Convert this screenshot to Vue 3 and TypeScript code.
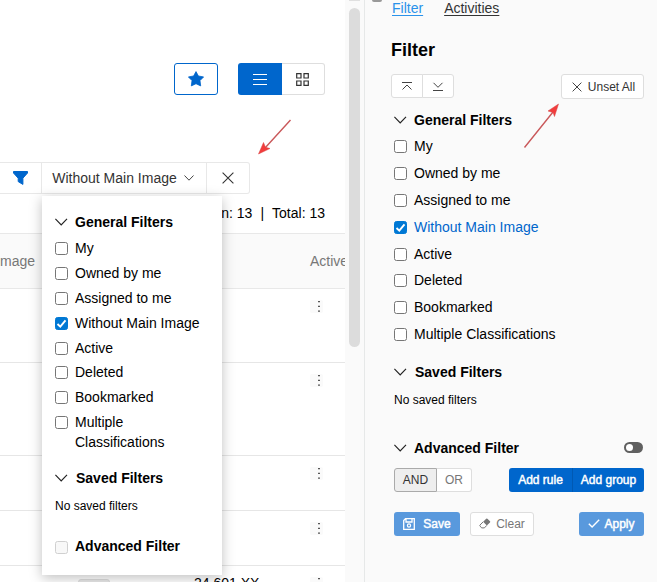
<script setup lang="ts">
interface FilterItem {
  label: string
  checked: boolean
}

const filters: FilterItem[] = [
  { label: 'My', checked: false },
  { label: 'Owned by me', checked: false },
  { label: 'Assigned to me', checked: false },
  { label: 'Without Main Image', checked: true },
  { label: 'Active', checked: false },
  { label: 'Deleted', checked: false },
  { label: 'Bookmarked', checked: false },
  { label: 'Multiple Classifications', checked: false },
]

const rowSizes: string[] = ['r74', 'r93', 'r55', 'r55', 'r55']
</script>

<template>
  <div class="screen">
    <main class="list">
      <div class="toolbar">
        <button class="star">
          <svg width="16" height="16" viewBox="0 0 16 16"><path d="M8 .6 10.4 5 15.6 5.900 12 9.600 12.700 14.900 8 12.700 3.300 14.900 4 9.600 .4 5.900 5.600 5Z" fill="#06c" stroke="#06c" stroke-width=".8" stroke-linejoin="round" /></svg>
        </button>
        <div class="views">
          <button class="view on">
            <svg width="14" height="11" viewBox="0 0 14 11"><path d="M0 .5H14M0 5.5H14M0 10.5H14" stroke="#fff" /></svg>
          </button>
          <button class="view grid">
            <svg width="13" height="13" viewBox="0 0 13 13"><path d="M.7 .7H5V5H.7ZM8 .7H12.3V5H8ZM.7 8H5V12.3H.7ZM8 8H12.3V12.3H8Z" fill="none" stroke="#333" stroke-width="1.2" /></svg>
          </button>
        </div>
      </div>

      <div class="filterbar">
        <div class="seg funnel">
          <svg width="15" height="14" viewBox="0 0 15 14"><path d="M.5 .5H14.5V2L9.9 7.2V13.4L5.2 10.6V7.2L.5 2Z" fill="#06c" stroke="#06c" stroke-linejoin="round" /></svg>
        </div>
        <div class="seg current">
          <span>Without Main Image</span>
          <svg width="10" height="6" viewBox="0 0 10 6"><path d="M.5 .5 5 5.2 9.5 .5" fill="none" stroke="#444" /></svg>
        </div>
        <div class="seg clear">
          <svg width="12" height="12" viewBox="0 0 12 12"><path d="M.6 .6 11.4 11.4M11.4 .6 .6 11.4" stroke="#333" stroke-width="1.1" /></svg>
        </div>
      </div>

      <div class="counts"><span>Shown: 13</span><span>|</span><span>Total: 13</span></div>

      <div class="table">
        <div class="thead"><span class="c-image">Main Image</span><span class="c-active">Active</span></div>
        <div v-for="(size, i) in rowSizes" :key="i" class="trow" :class="size">
          <span v-if="i === 4" class="tag"></span>
          <span v-if="i === 4" class="number">24 601 XX</span>
          <span class="more">
            <svg width="13" height="13" viewBox="0 0 13 13"><path d="M8 1H10V2.2H8ZM8 5.7H10V7H8ZM8 10.5H10V11.8H8Z" fill="#555" /></svg>
          </span>
        </div>
      </div>

      <div class="menu">
        <div class="group-title">
          <svg width="13" height="8" viewBox="0 0 13 8"><path d="M.4 .9 6.2 6.8 12 .9" fill="none" stroke="#222" stroke-width="1.2" /></svg>
          <span>General Filters</span>
        </div>
        <div v-for="f in filters" :key="f.label" class="item">
          <span class="box" :class="{ checked: f.checked }">
            <svg v-if="f.checked" width="11" height="11" viewBox="0 0 11 11"><path d="M1.5 6 4.3 8.7 9.5 2.4" fill="none" stroke="#fff" stroke-width="1.9" /></svg>
          </span>
          <span>{{ f.label }}</span>
        </div>
        <div class="group-title saved">
          <svg width="13" height="8" viewBox="0 0 13 8"><path d="M.4 .9 6.2 6.8 12 .9" fill="none" stroke="#222" stroke-width="1.2" /></svg>
          <span>Saved Filters</span>
        </div>
        <div class="empty">No saved filters</div>
        <div class="item advanced"><span class="box disabled"></span><span>Advanced Filter</span></div>
      </div>
    </main>

    <div class="gutter"><div class="track-end"></div><div class="thumb"></div></div>

    <aside class="panel">
      <div class="edge"></div>
      <nav class="tabs"><a class="active">Filter</a><a>Activities</a></nav>
      <h2>Filter</h2>
      <div class="actions">
        <div class="pair">
          <button class="btn"><svg width="12" height="9" viewBox="0 0 12 9"><path d="M1 .5H11M1.500 7.500 6 3 10.500 7.500" fill="none" stroke="#444" /></svg></button>
          <button class="btn"><svg width="12" height="9" viewBox="0 0 12 9"><path d="M1 8.5H11M1.5 .8 6 5.3 10.5 .8" fill="none" stroke="#444" /></svg></button>
        </div>
        <button class="btn unset">
          <svg width="10" height="10" viewBox="0 0 10 10"><path d="M.6 .6 9.4 9.4M9.4 .6 .6 9.4" stroke="#444" /></svg>
          <span>Unset All</span>
        </button>
      </div>

      <div class="group-title">
        <svg width="13" height="8" viewBox="0 0 13 8"><path d="M.4 .9 6.2 6.8 12 .9" fill="none" stroke="#222" stroke-width="1.2" /></svg>
        <span>General Filters</span>
      </div>
      <div v-for="f in filters" :key="f.label" class="item" :class="{ selected: f.checked }">
        <span class="box" :class="{ checked: f.checked }">
          <svg v-if="f.checked" width="11" height="11" viewBox="0 0 11 11"><path d="M1.5 6 4.3 8.7 9.5 2.4" fill="none" stroke="#fff" stroke-width="1.9" /></svg>
        </span>
        <span>{{ f.label }}</span>
      </div>
      <div class="group-title saved">
        <svg width="13" height="8" viewBox="0 0 13 8"><path d="M.4 .9 6.2 6.8 12 .9" fill="none" stroke="#222" stroke-width="1.2" /></svg>
        <span>Saved Filters</span>
      </div>
      <div class="empty">No saved filters</div>
      <div class="group-title adv">
        <svg width="13" height="8" viewBox="0 0 13 8"><path d="M.4 .9 6.2 6.8 12 .9" fill="none" stroke="#222" stroke-width="1.2" /></svg>
        <span>Advanced Filter</span>
        <span class="toggle"><span class="knob"></span></span>
      </div>

      <div class="rules">
        <div class="pair">
          <button class="btn and">AND</button>
          <button class="btn or">OR</button>
        </div>
        <div class="adders">
          <button>Add rule</button>
          <button>Add group</button>
        </div>
      </div>

      <div class="footer">
        <button class="primary save">
          <svg width="12" height="12" viewBox="0 0 12 12"><path d="M2.5 .7H11.3V11.3H.7V2.5ZM3 .9V4H9V.9" fill="none" stroke="#fff" stroke-width="1.3" /><circle cx="6" cy="7.5" r="1.6" fill="none" stroke="#fff" stroke-width="1.2" /></svg>
          <span>Save</span>
        </button>
        <button class="btn reset">
          <svg width="12" height="11" viewBox="0 0 12 11"><path d="M4.2 3.8 7.2 .8Q7.8 .2 8.4 .8L11 3.2Q11.5 3.8 11 4.4L7.8 7.4Z" fill="#777" /><path d="M4.2 3.8 1 7Q.5 7.6 1 8.2L2.8 9.9H5.4L7.8 7.4" fill="none" stroke="#777" /></svg>
          <span>Clear</span>
        </button>
        <button class="primary apply">
          <svg width="12" height="9" viewBox="0 0 12 9"><path d="M.8 4.8 4.1 8 11.2 .8" fill="none" stroke="#fff" stroke-width="1.4" /></svg>
          <span>Apply</span>
        </button>
      </div>
    </aside>

    <svg class="arrows" width="657" height="582" viewBox="0 0 657 582">
      <path d="M290.5 120 265 148M524.5 147.5 553 112" fill="none" stroke="#c9585a" stroke-width="1.4" />
      <path d="M258.5 154 263.500 142.500 265.500 147.300 270 148.500ZM558.5 104 548 111 553 112.500 554.500 116.500Z" fill="#f23c3c" stroke="#d84444" stroke-width=".5" />
    </svg>
  </div>
</template>

<style>
body {
  margin: 0;
  overflow: hidden;
}
</style>

<style scoped>
.screen {
  position: relative;
  display: flex;
  width: 657px;
  height: 582px;
  overflow: hidden;
  background: #fff;
  color: #000;
  font: 14px/20px "Liberation Sans", Arial, sans-serif;
}
.screen * {
  box-sizing: border-box;
}
svg {
  display: block;
  flex: none;
}
button {
  display: flex;
  align-items: center;
  justify-content: center;
  padding: 0;
  font: inherit;
  white-space: nowrap;
}
.list {
  position: relative;
  width: 345px;
  height: 582px;
  flex: none;
  overflow: hidden;
}
.toolbar {
  display: flex;
  gap: 20px;
  padding: 63px 0 0 174px;
}
.star {
  width: 44px;
  height: 32px;
  border: 1px solid #06c;
  border-radius: 3px;
  background: #fff;
}
.views {
  display: flex;
}
.view {
  width: 43px;
  height: 32px;
  border: 1px solid #dedede;
  border-left: 0;
  border-radius: 0 3px 3px 0;
  background: #fff;
}
.view.grid {
  padding-right: 1px;
}
.view.on {
  width: 44px;
  border: 0;
  border-radius: 3px 0 0 3px;
  background: #06c;
}
.filterbar {
  display: flex;
  width: 250px;
  height: 32px;
  margin-top: 67px;
  border: 1px solid #e8e8e8;
  border-left: 0;
  border-radius: 0 3px 3px 0;
}
.seg {
  display: flex;
  align-items: center;
  justify-content: center;
}
.funnel {
  width: 41px;
  padding-right: 1px;
}
.current {
  width: 166px;
  padding-right: 2px;
  border: solid #e8e8e8;
  border-width: 0 1px;
  gap: 7px;
  color: #333;
}
.clear {
  flex: 1;
  padding-right: 1px;
}
.counts {
  display: flex;
  justify-content: flex-end;
  gap: 8px;
  height: 39px;
  padding: 9px 20px 0 0;
}
.thead {
  display: flex;
  justify-content: space-between;
  align-items: center;
  height: 56px;
  border: solid #e8e8e8;
  border-width: 1px 0;
  background: #fafafa;
  color: #777;
  white-space: nowrap;
}
.c-image {
  display: flex;
  justify-content: flex-end;
  width: 35px;
}
.c-active {
  width: 35px;
}
.trow {
  display: flex;
  justify-content: flex-end;
  align-items: flex-start;
  padding: 11px 22px 0 0;
  border-bottom: 1px solid #e6e6e6;
}
.r74 { height: 74px; }
.r93 { height: 93px; }
.r55 { height: 55px; }
.more {
  width: 13px;
  height: 13px;
  border-radius: 2px;
  background: #fafafa;
}
.tag {
  width: 32px;
  height: 20px;
  margin: 2px 84px 0 0;
  border: 1px solid #ddd;
  border-radius: 3px;
  background: #e8e8e8;
}
.number {
  width: 116px;
  margin-top: -4px;
}
.menu {
  position: absolute;
  left: 42px;
  top: 196px;
  width: 180px;
  height: 379px;
  padding: 16px 13px 0;
  background: #fff;
  box-shadow: 0 3px 12px rgba(0, 0, 0, 0.25);
}
.group-title {
  display: flex;
  align-items: center;
  gap: 7px;
  height: 20px;
  font-weight: 700;
}
.menu .group-title + .item {
  margin-top: 6.2px;
}
.item {
  display: flex;
  gap: 7px;
  align-items: flex-start;
  padding-bottom: 4.85px;
}
.box {
  display: flex;
  flex: none;
  width: 13px;
  height: 13px;
  margin-top: 4px;
  border: 1px solid #767676;
  border-radius: 2.5px;
  background: #fff;
}
.box.checked {
  border-color: #0078d4;
  background: #0078d4;
}
.box.disabled {
  border-color: #d0d0d0;
  background: #f8f8f8;
}
.saved {
  gap: 8px;
}
.menu .saved {
  margin-top: 10.8px;
}
.empty {
  font-size: 12px;
}
.menu .empty {
  margin-top: 8px;
}
.menu .advanced {
  margin-top: 20px;
  font-weight: 700;
}
.advanced .box {
  margin-top: 5px;
}
.gutter {
  width: 20px;
  flex: none;
  padding-left: 4px;
  border-right: 1px solid #e6e8e8;
  background: #fafafa;
}
.track-end {
  width: 11px;
  height: 1px;
  background: #e0e0e0;
}
.thumb {
  width: 11px;
  height: 339px;
  margin-top: 7px;
  border-radius: 6px;
  background: #dcdcdc;
}
.panel {
  width: 292px;
  padding: 0 13px 0 29px;
  background: #fafafa;
}
.edge {
  width: 10px;
  height: 2px;
  margin-left: -22px;
  border-radius: 0 0 2px 2px;
  background: #999;
}
.tabs {
  display: flex;
  gap: 21px;
  margin: -4px 0 0 -2px;
}
.tabs a {
  color: #333;
  text-decoration: underline;
  text-underline-offset: 1.5px;
}
.tabs .active {
  color: #2a92ea;
}
h2 {
  margin: 20px 0 0 -3px;
  font-size: 18px;
  line-height: 24px;
}
.actions {
  display: flex;
  justify-content: space-between;
  margin: 12px 0 0 -3px;
}
.pair {
  display: flex;
}
.btn {
  border: 1px solid #dedede;
  border-radius: 3px;
  background: #fff;
  color: #333;
  font-size: 12px;
}
.actions .pair .btn {
  width: 32px;
  height: 24px;
}
.pair .btn:first-child {
  border-radius: 3px 0 0 3px;
}
.pair .btn:last-child {
  margin-left: -1px;
  border-radius: 0 3px 3px 0;
}
.unset {
  width: 83px;
  height: 25px;
  padding-left: 2px;
  gap: 6px;
}
.panel .group-title {
  margin-top: 11px;
}
.panel .item {
  padding-bottom: 6.85px;
}
.panel .group-title + .item {
  margin-top: 6.2px;
}
.selected {
  color: #06c;
}
.panel .saved {
  margin-top: 10.8px;
}
.panel .empty {
  margin-top: 8px;
}
.panel .adv {
  margin-top: 28px;
}
.toggle {
  width: 19px;
  height: 11px;
  margin-left: auto;
  margin-right: 1px;
  padding: 2px;
  border-radius: 6px;
  background: #606060;
}
.knob {
  display: block;
  width: 7px;
  height: 7px;
  border-radius: 50%;
  background: #fff;
}
.rules {
  display: flex;
  justify-content: space-between;
  margin-top: 10px;
}
.and {
  width: 43px;
  height: 24px;
  border-color: #aaa;
  background: #eee;
}
.pair .or {
  width: 36px;
  height: 24px;
  border-left-color: #aaa;
  color: #777;
}
.adders {
  display: flex;
  overflow: hidden;
  border-radius: 3px;
}
.adders button {
  width: 63px;
  height: 24px;
  border: 0;
  background: #06c;
  color: #fff;
  font-size: 12px;
  -webkit-text-stroke: 0.45px #fff;
}
.adders button + button {
  width: 72px;
  border-left: 1px solid #0059b3;
}
.footer {
  display: flex;
  margin-top: 20px;
}
.primary {
  height: 24px;
  border: 0;
  border-radius: 3px;
  background: #5999dd;
  color: #fff;
  font-size: 12px;
  -webkit-text-stroke: 0.45px #fff;
}
.save {
  width: 66px;
  gap: 8px;
}
.reset {
  width: 64px;
  height: 24px;
  margin-left: 10px;
  gap: 5px;
  color: #777;
}
.apply {
  width: 65px;
  margin-left: auto;
  gap: 4px;
}
.arrows {
  position: absolute;
  left: 0;
  top: 0;
  pointer-events: none;
}
</style>
